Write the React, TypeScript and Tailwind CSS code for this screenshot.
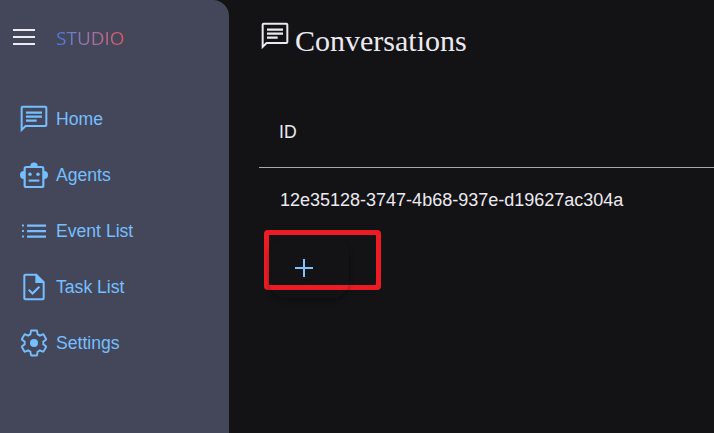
function ChatIcon({ className }: { className: string }) {
	return (
		<svg viewBox="0 0 24 24" fill="currentColor" className={className}>
			<path d="M20.5 2h-17C2.7 2 2 2.7 2 3.5V22l4-4h14.5c.8 0 1.5-.7 1.5-1.5v-13c0-.8-.7-1.5-1.5-1.5zm0 14.5H5.4l-1.9 1.9V3.5h17v13z" />
			<path d="M6 12.4h8V14H6zm0-3h12V11H6zm0-3h12V8H6z" />
		</svg>
	)
}

function BotIcon({ className }: { className: string }) {
	return (
		<svg viewBox="0 0 24 24" fill="currentColor" className={className}>
			<path d="M9.2 5.5a2.8 2.8 0 0 1 5.6 0z" />
			<path d="M4.5 9a3 3 0 0 0 0 6zM19.5 9a3 3 0 0 1 0 6z" />
			<rect x="5" y="6" width="14" height="15" rx="1.2" fill="none" stroke="currentColor" strokeWidth="1.6" />
			<circle cx="9" cy="11.5" r="1.3" />
			<circle cx="15" cy="11.5" r="1.3" />
			<path d="M8 15.4h8V17H8z" />
		</svg>
	)
}

function ListIcon({ className }: { className: string }) {
	return (
		<svg viewBox="0 0 24 24" fill="currentColor" className={className}>
			<path d="M3 7.2h1.4v1.4H3zm0 4.1h1.4v1.4H3zm0 4.1h1.4v1.4H3zM6.8 7.2H21v1.6H6.8zm0 4.1H21v1.6H6.8zm0 4.1H21V17H6.8z" />
		</svg>
	)
}

function TaskIcon({ className }: { className: string }) {
	return (
		<svg viewBox="0 0 24 24" fill="currentColor" className={className}>
			<path d="M14 2H5.5C4.7 2 4 2.7 4 3.5v17c0 .8.7 1.5 1.5 1.5h13c.8 0 1.5-.7 1.5-1.5V8l-6-6zm4.5 18.5h-13v-17H13V9h5.5v11.5z" />
			<path d="M14 3v5h5z" />
			<path d="M10.9 18l-3.4-3.4 1.1-1.1 2.3 2.3 4.6-4.6 1.1 1.1z" />
		</svg>
	)
}

function GearIcon({ className }: { className: string }) {
	return (
		<svg viewBox="0 0 24 24" fill="none" stroke="currentColor" strokeWidth="1.5" className={className}>
			<path d="M19.43 12.98c.04-.32.07-.64.07-.98 0-.34-.03-.66-.07-.98l2.11-1.65c.19-.15.24-.42.12-.64l-2-3.46c-.09-.16-.26-.25-.44-.25-.06 0-.12.01-.17.03l-2.49 1c-.52-.4-1.08-.73-1.69-.98l-.38-2.65C14.46 2.18 14.25 2 14 2h-4c-.25 0-.46.18-.49.42l-.38 2.65c-.61.25-1.17.59-1.69.98l-2.49-1c-.06-.02-.12-.03-.18-.03-.17 0-.34.09-.43.25l-2 3.46c-.13.22-.07.49.12.64l2.11 1.65c-.04.32-.07.65-.07.98 0 .33.03.66.07.98l-2.11 1.65c-.19.15-.24.42-.12.64l2 3.46c.09.16.26.25.44.25.06 0 .12-.01.17-.03l2.49-1c.52.4 1.08.73 1.69.98l.38 2.65c.03.24.24.42.49.42h4c.25 0 .46-.18.49-.42l.38-2.65c.61-.25 1.17-.59 1.69-.98l2.49 1c.06.02.12.03.18.03.17 0 .34-.09.43-.25l2-3.46c.12-.22.07-.49-.12-.64l-2.11-1.65z" />
			<circle cx="12" cy="12" r="3.2" fill="currentColor" stroke="none" />
		</svg>
	)
}

function NavItem({ label, children }: { label: string; children: React.ReactNode }) {
	return (
		<div className="flex h-14 items-center">
			<div className="flex w-[41px] justify-center pr-[3px]">{children}</div>
			<span className="text-[17.6px]">{label}</span>
		</div>
	)
}

export default function App() {
	return (
		<div className="flex h-[433px] w-[714px] overflow-hidden bg-[#131316] font-['Liberation_Sans',sans-serif]">
			{/* Sidebar */}
			<div className="w-[229px] shrink-0 rounded-tr-2xl bg-[#44475a]">
				<div className="flex h-[74px] items-center pl-[13px]">
					<div className="flex w-[22px] flex-col gap-[5px]">
						<div className="h-0.5 bg-[#ecebf0]" />
						<div className="h-0.5 bg-[#ecebf0]" />
						<div className="h-0.5 bg-[#ecebf0]" />
					</div>
					<span className="mt-[2px] ml-[21px] bg-gradient-to-r from-[#3f7ae6] to-[#e0505c] bg-clip-text font-['Open_Sans',sans-serif] text-[19px] font-normal text-transparent">
						STUDIO
					</span>
				</div>
				<div className="flex flex-col pt-[17px] pl-[15px] text-[#75bfff]">
					<NavItem label="Home">
						<ChatIcon className="size-8" />
					</NavItem>
					<NavItem label="Agents">
						<BotIcon className="size-8" />
					</NavItem>
					<NavItem label="Event List">
						<ListIcon className="size-8" />
					</NavItem>
					<NavItem label="Task List">
						<TaskIcon className="size-8" />
					</NavItem>
					<NavItem label="Settings">
						<GearIcon className="size-[30px]" />
					</NavItem>
				</div>
			</div>

			{/* Main */}
			<div className="flex-1 pl-[30px] text-[#eceaf0]">
				<div className="flex h-[74px] items-start pt-[20px]">
					<ChatIcon className="size-8" />
					<h1 className="ml-[4px] font-['Liberation_Serif',serif] text-[30px] leading-[42px]">Conversations</h1>
				</div>
				<div className="flex h-[94px] items-end border-b border-[#a9a9ab] pb-[22px] pl-[20px] text-[17.6px]">ID</div>
				<div className="flex h-[65px] items-center pl-[21px] text-[18px]">12e35128-3747-4b68-937e-d19627ac304a</div>
				<div className="relative -mt-[3px] ml-[5px] flex h-[60px] w-[117px] items-center rounded-sm border-[5px] border-[#ed1c24] pt-[16px] pl-[25px] text-[#7cc4ff]">
					<div className="absolute top-[3px] left-0 h-[60px] w-[80px] rounded-2xl shadow-[0_3px_5px_rgba(0,0,0,0.3)]" />
					<svg viewBox="0 0 20 20" className="size-5" stroke="currentColor" strokeWidth="2" fill="none">
						<path d="M10 1v18M1 10h18" />
					</svg>
				</div>
			</div>
		</div>
	)
}
